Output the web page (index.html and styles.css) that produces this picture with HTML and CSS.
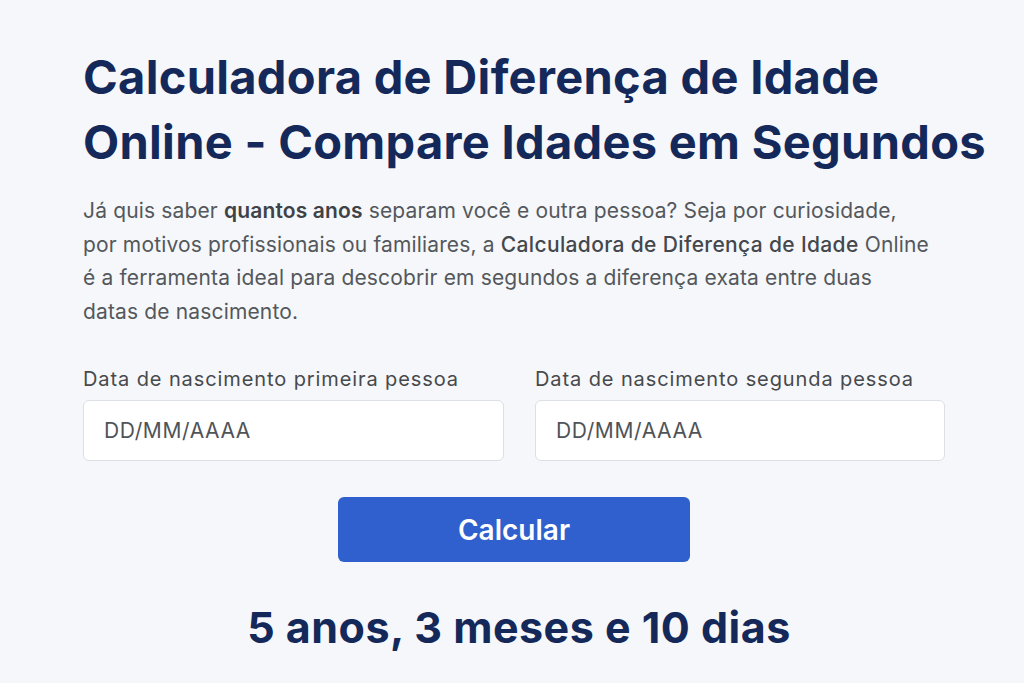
FILE: index.html
```html
<!DOCTYPE html>
<html lang="pt">
<head>
<meta charset="utf-8">
<title>Calculadora de Diferença de Idade</title>
<link rel="stylesheet" href="styles.css">
</head>
<body>
<main class="page">
  <h1 class="title">Calculadora de Diferença de Idade Online - Compare Idades em Segundos</h1>
  <p class="intro">Já quis saber <strong>quantos anos</strong> separam você e outra pessoa? Seja por curiosidade,<br>por motivos profissionais ou familiares, a <span class="em">Calculadora de Diferença de Idade</span> Online<br>é a ferramenta ideal para descobrir em segundos a diferença exata entre duas<br>datas de nascimento.</p>
  <form class="form">
    <div class="fields">
      <label class="field">
        <span class="label">Data de nascimento primeira pessoa</span>
        <input class="input" type="text" placeholder="DD/MM/AAAA">
      </label>
      <label class="field">
        <span class="label">Data de nascimento segunda pessoa</span>
        <input class="input" type="text" placeholder="DD/MM/AAAA">
      </label>
    </div>
    <button class="btn" type="button">Calcular</button>
    <div class="result">5 anos, 3 meses e 10 dias</div>
  </form>
</main>
</body>
</html>
```
FILE: styles.css
```css
html, body {
  margin: 0;
  padding: 0;
  background: #f5f7fa;
}
body {
  font-family: Inter, "Noto Sans", sans-serif;
  color: #4a4d52;
}
.page {
  padding: 44px 0 0 83px;
  width: 920px;
}
.title {
  margin: 0;
  font-size: 47px;
  line-height: 65px;
  font-weight: 700;
  color: #14295a;
  letter-spacing: 0.3px;
}
.intro {
  margin: 20px 0 0;
  font-size: 21px;
  line-height: 33.5px;
  color: #54575c;
  letter-spacing: 0.15px;
  white-space: nowrap;
}
.intro strong {
  font-weight: 600;
  color: #3f4247;
}
.intro .em {
  font-weight: 500;
  color: #44474c;
  letter-spacing: 0.35px;
}
.form {
  width: 862px;
  margin-top: 39px;
  display: flex;
  flex-direction: column;
  align-items: center;
}
.fields {
  width: 100%;
  display: grid;
  grid-template-columns: 421px 410px;
  gap: 31px;
}
.field {
  display: flex;
  flex-direction: column;
  gap: 9px;
}
.label {
  font-size: 20px;
  line-height: 24px;
  color: #47494d;
  letter-spacing: 0.9px;
  white-space: nowrap;
}
.input {
  box-sizing: border-box;
  height: 61px;
  border: 1px solid #dcdfe3;
  border-radius: 6px;
  background: #fff;
  padding: 0 20px;
  font-family: inherit;
  font-size: 21px;
  letter-spacing: 0.6px;
  color: #4a4d52;
}
.input::placeholder {
  color: #505357;
}
.btn {
  margin-top: 36px;
  width: 352px;
  height: 65px;
  border: none;
  border-radius: 6px;
  background: #2f60cd;
  color: #fff;
  font-family: inherit;
  font-size: 28px;
  font-weight: 600;
}
.result {
  margin-top: 40px;
  font-size: 43px;
  font-weight: 700;
  color: #14295a;
  line-height: 50px;
  letter-spacing: 0.5px;
  padding-left: 10px;
}
```
